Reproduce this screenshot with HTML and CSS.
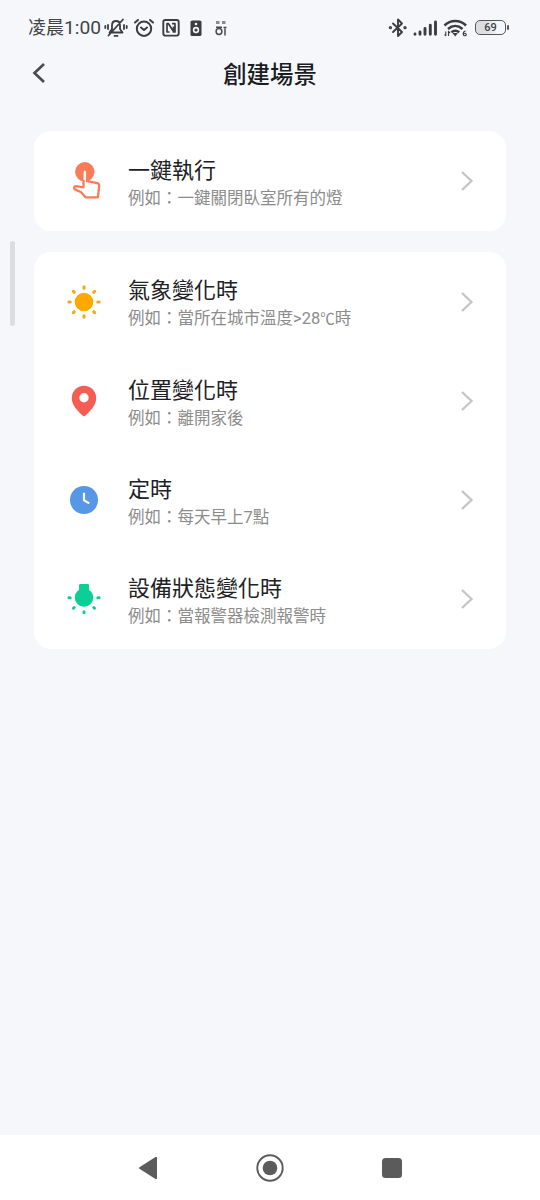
FILE: index.html
```html
<!DOCTYPE html>
<html lang="zh-Hant">
<head>
<meta charset="utf-8">
<title>創建場景</title>
<link rel="stylesheet" href="styles.css">
</head>
<body>
<div class="screen">
  <header class="status">
    <div class="status-left">
      <span class="time"><span class="period">凌晨</span>1:00</span>
      <svg class="mute" width="24" height="20" viewBox="0 0 24 20" fill="none" stroke="#3c3d40" stroke-width="1.8" stroke-linecap="round" stroke-linejoin="round"><path d="M5.500 14.500 8 11V7.500C8 4.500 9.500 3 12 3s4 1.500 4 4.500V11l2.500 3.500zM4.500 17.500 19 1.500M10.500 17.900h3M4 7v4M1.300 8v2M20 7v4M22.700 8v2"/></svg>
      <svg class="alarm" width="22" height="20" viewBox="0 0 22 20" fill="none" stroke="#3c3d40" stroke-width="2" stroke-linecap="round" stroke-linejoin="round"><circle cx="11" cy="10.700" r="7.200"/><path d="M8 9.500 11 12l3-2.500M2 4.500 5 2M20 4.500 17 2"/></svg>
      <svg class="nfc" width="18" height="20" viewBox="0 0 18 20" fill="none" stroke="#3c3d40" stroke-width="1.900" stroke-linejoin="round"><rect x="1.300" y="2" width="15.400" height="15.600" rx="2"/><path stroke-width="1.700" d="M7.500 14H5V5.700H6.500L11.500 13.500M10 5.700h3V14h-1.500V8.500"/></svg>
      <svg class="speaker" width="12" height="20" viewBox="0 0 12 20"><rect x=".5" y="2.500" width="11" height="15.500" rx="1.600" fill="#3c3d40"/><circle cx="6" cy="6" r="1.300" fill="#f5f6fb"/><circle cx="6" cy="12" r="3.200" fill="#f5f6fb"/><circle cx="6" cy="12" r="1.600" fill="#3c3d40"/></svg>
      <svg class="carrier" width="14" height="20" viewBox="0 0 14 20" fill="none" stroke="#4a4b4e" stroke-width="1.500"><path stroke="#8a8b8e" stroke-width="3" d="M2 4.500h3.500M8 4.500h3.500"/><circle cx="5" cy="13.500" r="2.900"/><path d="M2 9.300h6M11 10.500v7M9.500 9.500h3"/></svg>
    </div>
    <div class="status-right">
      <svg width="20" height="22" viewBox="0 0 20 22" fill="none" stroke="#3c3d40" stroke-width="1.900" stroke-linejoin="round" stroke-linecap="round"><path d="M5 6.500 14 15l-4 4V2.500l4 4L5 15"/><circle cx="2.400" cy="10.700" r=".7"/><circle cx="17" cy="10.700" r=".7"/></svg>
      <svg class="signal" width="25" height="18" viewBox="0 0 25 18" fill="none" stroke="#3c3d40" stroke-width="2.900" stroke-linecap="round"><path d="M2 15v.2M7 13v2.300M12 9.500v5.800M17.300 6.300v9M22.500 3v12.300"/></svg>
      <svg class="wifi" width="25" height="20" viewBox="0 0 25 20" fill="none" stroke="#3c3d40" stroke-width="2.500"><path d="M1.500 7.500c6-6 15.500-6 21.500 0M5 11c4.500-4 10-4 14.500 0M8.300 14.300c2.500-2 5.500-2 8 0"/><path d="m9.500 15 2.700 3.500 2.700-3.500z" fill="#3c3d40" stroke="none"/><path stroke-width="1.100" d="M2.800 13.500V18M1.500 16.500 2.800 18M5.500 18v-4.500L7 15M22.500 13c-2 .5-2.500 2-2.200 3.500.5 2 3.200 1.500 3-.2-.3-1.500-2.300-1.500-2.800 0"/></svg>
      <span class="battery"><span class="level">69</span></span>
    </div>
  </header>

  <nav class="titlebar">
    <svg class="back" width="14" height="22" viewBox="0 0 14 22" fill="none" stroke="#4a4c50" stroke-width="2.700"><path d="M12 2 2.500 11l9.500 9"/></svg>
    <h1>創建場景</h1>
  </nav>

  <main>
    <section class="card">
      <div class="row">
        <svg class="icon" viewBox="0 0 48 48"><circle cx="24.800" cy="14.800" r="9.700" fill="#fa7b57"/><path d="M23.600 30V15c0-1.700 2.500-1.700 2.500 0v8.800l11 2.300c1.500.4 2.300 1.300 2.100 2.900L37.900 40.300H25.500l-4.300-5-6.200-2.900c-1.700-1.100-1-3.300 1.100-3.200z" fill="#fff"/><path d="M23.500 23v7.300L16.100 29.200c-2.100-.1-2.800 2.100-1.100 3.200l6.200 2.900 4.300 5h12.400l1.300-11.300c.2-1.600-.6-2.500-2.100-2.900l-11-2.300" fill="none" stroke="#fa7b57" stroke-width="2.300" stroke-linejoin="round"/></svg>
        <div class="text"><h2>一鍵執行</h2><p>例如：一鍵關閉臥室所有的燈</p></div>
        <svg class="chevron" viewBox="0 0 14 22"><path d="m2 2 9.500 9L2 20"/></svg>
      </div>
    </section>

    <section class="card">
      <div class="row">
        <svg class="icon" viewBox="0 0 48 48"><circle cx="24" cy="24" r="9.300" fill="#ffa800"/><path d="M24 10.200V8.900M24 37.800v1.300M10.200 24H8.900M37.800 24h1.300M14.200 14.200l-.8-.8M33.800 14.200l.8-.8M14.200 33.800l-.8.8M33.800 33.800l.8.8" stroke="#f5a91c" stroke-width="3.200" stroke-linecap="round"/></svg>
        <div class="text"><h2>氣象變化時</h2><p>例如：當所在城市溫度&gt;28<span class="degree">℃</span>時</p></div>
        <svg class="chevron" viewBox="0 0 14 22"><path d="m2 2 9.500 9L2 20"/></svg>
      </div>
      <div class="row">
        <svg class="icon" viewBox="0 0 48 48"><path fill="#f55c54" fill-rule="evenodd" d="M24 8.700a12.200 12.200 0 0 0-12.200 12.200c0 7.300 5.700 12.700 10.700 17.600q1.500 1.400 3 0c5-4.900 10.700-10.300 10.700-17.600A12.200 12.200 0 0 0 24 8.700zm0 7.400a4.700 4.700 0 1 1 0 9.400 4.700 4.700 0 0 1 0-9.400z"/></svg>
        <div class="text"><h2>位置變化時</h2><p>例如：離開家後</p></div>
        <svg class="chevron" viewBox="0 0 14 22"><path d="m2 2 9.500 9L2 20"/></svg>
      </div>
      <div class="row">
        <svg class="icon" viewBox="0 0 48 48"><circle cx="24" cy="24" r="14" fill="#5698e5"/><path d="M24 16.700v7.600l5.300 3.100" fill="none" stroke="#fff" stroke-width="2.200"/></svg>
        <div class="text"><h2>定時</h2><p>例如：每天早上7點</p></div>
        <svg class="chevron" viewBox="0 0 14 22"><path d="m2 2 9.500 9L2 20"/></svg>
      </div>
      <div class="row">
        <svg class="icon" viewBox="0 0 48 48"><g fill="#0bcf94"><circle cx="24" cy="22.500" r="9.300"/><path d="M20.300 8.900h7.400q1.300 0 1.300 1.300V17H19v-6.800q0-1.300 1.300-1.300z"/></g><path d="M24 36.700v1M10.200 22.700H8.900M37.800 22.700h1.300M14.200 32.500l-.7.700M33.800 32.500l.7.700" stroke="#0bcf94" stroke-width="3" stroke-linecap="round"/></svg>
        <div class="text"><h2>設備狀態變化時</h2><p>例如：當報警器檢測報警時</p></div>
        <svg class="chevron" viewBox="0 0 14 22"><path d="m2 2 9.500 9L2 20"/></svg>
      </div>
    </section>
  </main>

  <footer class="navbar">
    <svg width="30" height="30" viewBox="0 0 30 30"><path d="M7 15 23 4.800v20.400z" fill="#5b5b5b" stroke="#5b5b5b" stroke-width="2" stroke-linejoin="round"/></svg>
    <svg width="30" height="30" viewBox="0 0 30 30"><circle cx="15" cy="15" r="12.700" fill="none" stroke="#5b5b5b" stroke-width="1.900"/><circle cx="15" cy="15" r="7.300" fill="#5b5b5b"/></svg>
    <svg width="30" height="30" viewBox="0 0 30 30"><rect x="5" y="5" width="20" height="20" rx="3.500" fill="#5b5b5b"/></svg>
  </footer>
  <div class="edge-handle"></div>
</div>
</body>
</html>
```

FILE: styles.css
```css
* { box-sizing: border-box; }
body, h1, h2, p { margin: 0; }
body { font-family: Roboto, "Noto Sans CJK TC", sans-serif; background: #f5f7fb; }
svg { display: block; flex: none; }

.screen {
  position: relative;
  display: flex;
  flex-direction: column;
  width: 540px;
  height: 1200px;
  background: #f5f7fb;
}

.status {
  display: flex;
  justify-content: space-between;
  height: 54px;
  padding: 0 34px 0 28px;
  color: #424347;
}
.status-left, .status-right { display: flex; align-items: center; height: 55px; }
.time { width: 76px; padding-top: 1px; font-size: 19.200px; line-height: 26px; white-space: nowrap; }
.period { font-size: 18px; }
.alarm { margin-left: 5px; }
.nfc { margin-left: 7px; }
.speaker { margin-left: 10px; }
.carrier { margin-left: 12px; }
.signal { margin-left: 5px; }
.wifi { margin-left: 5px; }
.battery {
  position: relative;
  width: 31px;
  height: 15px;
  margin-left: 7px;
  border: 1.500px solid #55565a;
  border-radius: 5px;
  background: linear-gradient(90deg, #dcdde1 30%, #eeeff3 68%, transparent 68%);
  font-size: 11px;
  font-weight: 500;
  line-height: 13px;
  text-align: center;
}
.battery::after {
  content: "";
  position: absolute;
  right: -4px;
  top: 4px;
  width: 2px;
  height: 5px;
  border-radius: 1px;
  background: #55565a;
}

.titlebar {
  display: grid;
  grid-template-columns: 50px 1fr 50px;
  align-items: center;
  height: 36px;
  color: #1b1c1f;
}
.back { justify-self: end; margin-right: 4px; }
h1 { padding-top: 4px; font-size: 23.400px; font-weight: 500; line-height: 34px; text-align: center; }

main {
  display: flex;
  flex: 1;
  flex-direction: column;
  gap: 21px;
  padding: 41px 34px 0;
}
.card { padding: .5px 0; border-radius: 17px; background: #fff; }
.row { display: flex; align-items: center; height: 99px; padding: 0 32px 0 26px; }
.icon { width: 48px; height: 48px; }
.text { flex: 1; margin-left: 20px; padding-top: 4px; }
h2 { color: #202124; font-size: 22px; font-weight: 400; line-height: 30px; }
p { color: #8c8c8c; font-size: 16.500px; font-weight: 400; line-height: 25px; }
.degree { font-size: 14.500px; }
.chevron { width: 14px; height: 22px; fill: none; stroke: #c5c5c5; stroke-width: 2.300px; }

.navbar {
  display: flex;
  justify-content: center;
  align-items: center;
  gap: 92px;
  height: 65px;
  background: #fff;
}
.edge-handle {
  position: absolute;
  left: 10px;
  top: 241px;
  width: 5px;
  height: 85px;
  border-radius: 3px;
  background: #dcdde1;
}
```
